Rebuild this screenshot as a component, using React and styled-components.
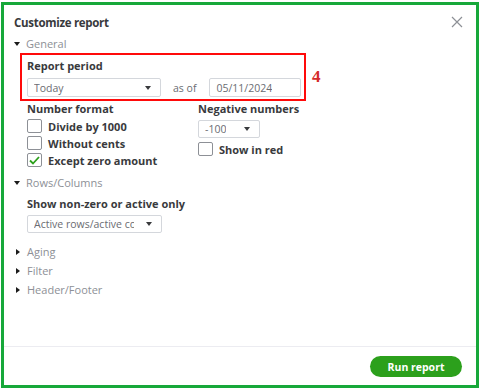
import React from "react";
import styled, { createGlobalStyle } from "styled-components";

const GlobalStyle = createGlobalStyle`
  body {
    margin: 0;
    background: #ffffff;
    font-family: "Open Sans", "Liberation Sans", sans-serif;
    color: #393a3d;
  }
`;

const Page = styled.div`
  padding: 2px 1px 0 1px;
  width: 480px;
  height: 390px;
  box-sizing: border-box;
`;

const Frame = styled.div`
  border: 3px solid #17a83a;
  height: 386px;
  box-sizing: border-box;
  display: flex;
  flex-direction: column;
  background: #fff;
`;

const Body = styled.div`
  flex: 1;
  padding: 7px 0 0 10px;
  display: flex;
  flex-direction: column;
`;

const Header = styled.div`
  display: flex;
  justify-content: space-between;
  align-items: center;
  height: 20px;
  padding-right: 13px;
`;

const Title = styled.h1`
  margin: 0;
  font-size: 11.5px;
  letter-spacing: -0.3px;
  font-weight: 700;
  color: #393a3d;
`;

const Close = styled.svg`
  width: 12px;
  height: 12px;
`;

const SectionToggle = styled.div`
  display: flex;
  align-items: center;
  gap: 6px;
  font-size: 11px;
  color: #8d9096;
  height: 19px;
  margin-top: ${(p) => p.$top || 0}px;
`;

const Down = styled.span`
  width: 0;
  height: 0;
  border-left: 3.5px solid transparent;
  border-right: 3.5px solid transparent;
  border-top: 4px solid #${(p) => p.$c || "1b1b1b"};
`;

const Right = styled.span`
  width: 0;
  height: 0;
  margin-left: 2px;
  margin-right: 1px;
  border-top: 3.5px solid transparent;
  border-bottom: 3.5px solid transparent;
  border-left: 4px solid #1b1b1b;
`;

const Highlight = styled.div`
  margin-left: 6px;
  width: 286px;
  height: 48px;
  box-sizing: border-box;
  border: 2px solid #ff0a0a;
  padding: 3px 0 0 5px;
  position: relative;
`;

const Marker = styled.span`
  position: absolute;
  left: 290px;
  top: 12px;
  font-family: "Liberation Serif", serif;
  font-weight: 700;
  font-size: 17px;
  color: #d42a2a;
`;

const Label = styled.div`
  font-size: 11px;
  font-weight: 700;
  color: #393a3d;
  height: 15px;
  line-height: 15px;
  margin-top: ${(p) => p.$top || 0}px;
`;

const Row = styled.div`
  display: flex;
  align-items: center;
  margin-top: ${(p) => p.$top || 0}px;
`;

const Select = styled.div`
  width: ${(p) => p.$w}px;
  height: ${(p) => p.$h || 19}px;
  margin-top: ${(p) => p.$top || 0}px;
  box-sizing: border-box;
  border: 1px solid #d4d7dc;
  border-radius: 2px;
  display: flex;
  align-items: center;
  justify-content: space-between;
  padding: 0 9px 0 6px;
  font-size: 10.5px;
  color: #6b6c72;
  overflow: hidden;
  white-space: nowrap;
`;

const SelectText = styled.span`
  overflow: hidden;
  max-width: ${(p) => p.$max || 200}px;
`;

const AsOf = styled.span`
  font-size: 10.5px;
  color: #6b6c72;
  margin: 0 13px 0 12px;
`;

const Columns = styled.div`
  display: flex;
  padding-left: 13px;
`;

const Column = styled.div`
  width: ${(p) => p.$w}px;
  display: flex;
  flex-direction: column;
`;

const Check = styled.label`
  display: flex;
  align-items: center;
  gap: 6px;
  height: 14px;
  margin-top: ${(p) => p.$top || 3}px;
  font-size: 11px;
  font-weight: 700;
  color: #393a3d;
`;

const Box = styled.span`
  width: 15px;
  height: 14px;
  box-sizing: border-box;
  border: 1px solid #8d9096;
  border-radius: 2px;
  display: flex;
  align-items: center;
  justify-content: center;
`;

const Indent = styled.div`
  padding-left: 13px;
  display: flex;
  flex-direction: column;
`;

const Footer = styled.div`
  border-top: 1px solid #ececf1;
  height: 38px;
  display: flex;
  align-items: center;
  justify-content: flex-end;
  padding-right: 14px;
`;

const RunButton = styled.button`
  width: 92px;
  height: 21px;
  border: none;
  border-radius: 11px;
  background: #2ca01c;
  color: #fff;
  font-family: "Open Sans", "Liberation Sans", sans-serif;
  font-size: 10.5px;
  font-weight: 700;
  margin-top: 1px;
`;

const Caret = () => <Down $c="393a3d" />;

const CheckItem = ({ checked, children, top }) => (
  <Check $top={top}>
    <Box>
      {checked && (
        <svg width="11" height="9" viewBox="0 0 11 9">
          <path d="M1 4.5 L4 7.5 L10 1" fill="none" stroke="#2ca01c" strokeWidth="1.8" />
        </svg>
      )}
    </Box>
    {children}
  </Check>
);

export default function App() {
  return (
    <>
      <GlobalStyle />
      <Page>
        <Frame>
          <Body>
            <Header>
              <Title>Customize report</Title>
              <Close viewBox="0 0 12 12">
                <path d="M1 1 L11 11 M11 1 L1 11" stroke="#8d9096" strokeWidth="1.2" />
              </Close>
            </Header>
            <SectionToggle $top={2}>
              <Down />
              General
            </SectionToggle>
            <Highlight>
              <Label>Report period</Label>
              <Row $top={5}>
                <Select $w={134}>
                  <SelectText>Today</SelectText>
                  <Caret />
                </Select>
                <AsOf>as of</AsOf>
                <Select $w={92}>
                  <SelectText>05/11/2024</SelectText>
                </Select>
              </Row>
              <Marker>4</Marker>
            </Highlight>
            <Columns>
              <Column $w={171}>
                <Label>Number format</Label>
                <CheckItem top={3}>Divide by 1000</CheckItem>
                <CheckItem>Without cents</CheckItem>
                <CheckItem checked>Except zero amount</CheckItem>
              </Column>
              <Column $w={140}>
                <Label>Negative numbers</Label>
                <Select $w={62} $h={18} $top={4}>
                  <SelectText>-100</SelectText>
                  <Caret />
                </Select>
                <CheckItem top={4}>Show in red</CheckItem>
              </Column>
            </Columns>
            <SectionToggle $top={6}>
              <Down />
              Rows/Columns
            </SectionToggle>
            <Indent>
              <Label $top={4}>Show non-zero or active only</Label>
              <Select $w={135} $h={18} $top={4}>
                <SelectText $max={100}>Active rows/active co</SelectText>
                <Caret />
              </Select>
            </Indent>
            <SectionToggle $top={9}>
              <Right />
              Aging
            </SectionToggle>
            <SectionToggle>
              <Right />
              Filter
            </SectionToggle>
            <SectionToggle>
              <Right />
              Header/Footer
            </SectionToggle>
          </Body>
          <Footer>
            <RunButton>Run report</RunButton>
          </Footer>
        </Frame>
      </Page>
    </>
  );
}
